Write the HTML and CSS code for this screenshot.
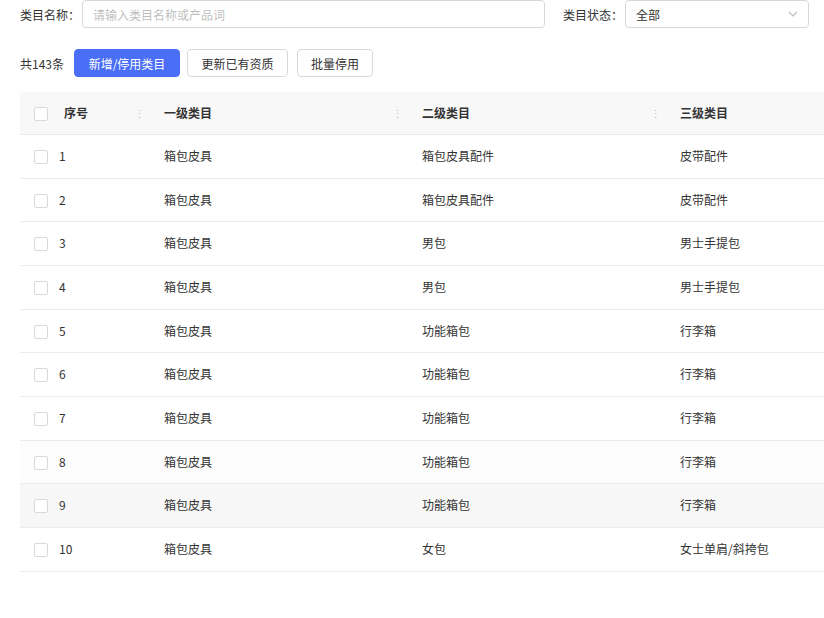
FILE: index.html
```html
<!DOCTYPE html>
<html lang="zh-CN">

<head>
    <meta charset="UTF-8">
    <title>类目管理</title>
    <link rel="stylesheet" href="styles.css">
</head>

<body>

    <div class="filtro">
        <label class="rotulo">类目名称：</label>
        <input type="text" class="campo campo-nome" placeholder="请输入类目名称或产品词">

        <label class="rotulo rotulo-status">类目状态：</label>
        <div class="campo campo-status">
            <span>全部</span>
            <svg class="seta" width="10" height="6" viewBox="0 0 10 6">
                <path d="M1 1 L5 5 L9 1" fill="none" stroke="#bfbfbf" stroke-width="1.2" />
            </svg>
        </div>
    </div>

    <div class="acoes">
        <span class="total">共143条</span>
        <button class="btn btn-primario">新增/停用类目</button>
        <button class="btn btn-meio">更新已有资质</button>
        <button class="btn btn-lote">批量停用</button>
    </div>

    <div class="tabela-wrap">
        <table class="tabela">
            <colgroup>
                <col style="width:128px">
                <col style="width:258px">
                <col style="width:258px">
                <col style="width:258px">
            </colgroup>
            <thead>
                <tr>
                    <th class="col-num"><span class="check"></span><span class="th-num">序号</span><i class="divisor">⋮</i></th>
                    <th>一级类目<i class="divisor">⋮</i></th>
                    <th>二级类目<i class="divisor">⋮</i></th>
                    <th>三级类目</th>
                </tr>
            </thead>
            <tbody id="linhas"></tbody>
        </table>
    </div>

    <script>
        const linhas = [
            ['箱包皮具', '箱包皮具配件', '皮带配件'],
            ['箱包皮具', '箱包皮具配件', '皮带配件'],
            ['箱包皮具', '男包', '男士手提包'],
            ['箱包皮具', '男包', '男士手提包'],
            ['箱包皮具', '功能箱包', '行李箱'],
            ['箱包皮具', '功能箱包', '行李箱'],
            ['箱包皮具', '功能箱包', '行李箱'],
            ['箱包皮具', '功能箱包', '行李箱'],
            ['箱包皮具', '功能箱包', '行李箱'],
            ['箱包皮具', '女包', '女士单肩/斜挎包']
        ];

        let html = '';
        linhas.forEach((l, i) => {
            let cls = '';
            if (i === 7) cls = 'leve';
            if (i === 8) cls = 'hover';
            html += `<tr class="${cls}">
                <td class="col-num"><span class="check"></span><span class="td-num">${i + 1}</span></td>
                <td>${l[0]}</td>
                <td>${l[1]}</td>
                <td>${l[2]}</td>
            </tr>`;
        });
        document.getElementById('linhas').innerHTML = html;
    </script>
</body>

</html>
```

FILE: styles.css
```css
body {
    font-family: "Noto Sans CJK SC", "Liberation Sans", sans-serif;
    font-size: 12px;
    color: #333;
    margin: 0;
    padding: 0 0 0 20px;
    background: #fff;
    overflow: hidden;
}

.filtro {
    display: flex;
    align-items: center;
    height: 28px;
}

.rotulo {
    width: 62px;
    white-space: nowrap;
    color: #333;
}

.rotulo-status {
    margin-left: 18px;
}

.campo {
    box-sizing: border-box;
    height: 28px;
    border: 1px solid #d9d9d9;
    border-radius: 4px;
    font-family: inherit;
    font-size: 12px;
    color: #333;
    background: #fff;
    outline: none;
}

.campo-nome {
    width: 463px;
    padding: 0 10px;
}

.campo-nome::placeholder {
    color: #bfbfbf;
}

.campo-status {
    width: 184px;
    display: flex;
    align-items: center;
    justify-content: space-between;
    padding: 0 10px 0 10px;
}

.acoes {
    display: flex;
    align-items: center;
    margin-top: 21px;
    height: 28px;
}

.total {
    width: 54px;
    white-space: nowrap;
}

.btn {
    box-sizing: border-box;
    height: 28px;
    padding: 0;
    margin-right: 9px;
    font-family: inherit;
    font-size: 12px;
    color: #333;
    background: #fff;
    border: 1px solid #d9d9d9;
    border-radius: 4px;
    cursor: pointer;
}

.btn-meio {
    width: 101px;
}

.btn-lote {
    width: 76px;
}

.btn-primario {
    background: #4a6ef6;
    border-color: #4a6ef6;
    color: #fff;
    width: 106px;
    margin-right: 7px;
}

.tabela-wrap {
    margin-top: 15px;
    overflow: hidden;
}

.tabela {
    border-collapse: collapse;
    table-layout: fixed;
    width: 902px;
}

.tabela th,
.tabela td {
    text-align: left;
    padding: 12px 0 12px 16px;
    border-bottom: 1px solid #ebebeb;
    white-space: nowrap;
    position: relative;
}

.tabela th {
    background: #f8f8f8;
    font-weight: bold;
    line-height: 18px;
    color: #333;
}

.tabela td {
    line-height: 18.67px;
}

.tabela .col-num {
    padding-left: 14px;
}

.check {
    display: inline-block;
    box-sizing: border-box;
    width: 14px;
    height: 14px;
    border: 1px solid #d9d9d9;
    border-radius: 2px;
    background: #fff;
    vertical-align: -3px;
}

.th-num {
    margin-left: 16px;
}

.td-num {
    margin-left: 11px;
}

.divisor {
    position: absolute;
    right: 3px;
    top: 50%;
    transform: translateY(-50%);
    font-style: normal;
    font-weight: normal;
    color: #b8b8b8;
    font-size: 11px;
    line-height: 1;
}

tr.leve td {
    background: #fcfcfc;
}

tr.hover td {
    background: #f7f7f7;
}
```
